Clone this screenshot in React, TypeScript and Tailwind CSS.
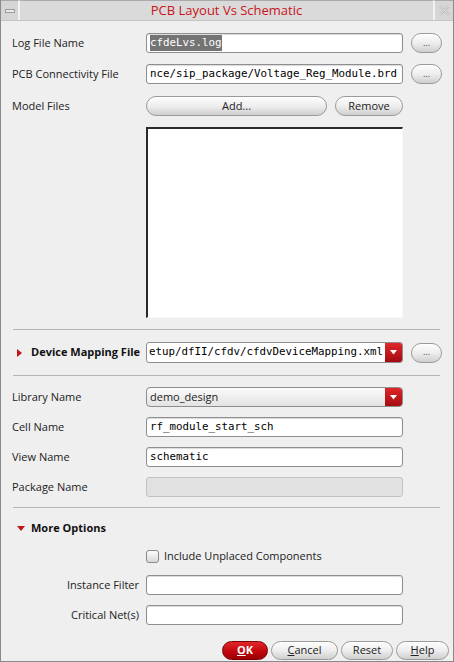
import React from "react";

const sans = { fontFamily: '"Open Sans", "DejaVu Sans", sans-serif' };
const mono = { fontFamily: '"DejaVu Sans Mono", monospace' };

function PillButton({ children, className = "" }: { children: React.ReactNode; className?: string }) {
  return (
    <div
      className={
        "flex items-center justify-center rounded-full border border-[#9a9a9a] bg-gradient-to-b from-[#fdfdfd] via-[#eeeeee] to-[#cfcfcf] text-[11px] text-[#222] shadow-[inset_0_1px_0_#fff] " +
        className
      }
      style={sans}
    >
      {children}
    </div>
  );
}

function Dots() {
  return (
    <PillButton className="w-[31px] h-[20px]">
      <span className="text-[9px] leading-none -mt-[2px] text-[#444]">...</span>
    </PillButton>
  );
}

function TextInput({ children, className = "" }: { children?: React.ReactNode; className?: string }) {
  return (
    <div
      className={
        "w-[257px] h-[20px] rounded-[3px] border border-[#8e8e8e] bg-white flex items-center pl-[3px] overflow-hidden whitespace-nowrap text-[10.8px] text-black shadow-[inset_0_1px_1px_rgba(0,0,0,0.15)] " +
        className
      }
      style={mono}
    >
      {children}
    </div>
  );
}

function RedArrow({ className = "" }: { className?: string }) {
  return (
    <div className={"w-[17px] shrink-0 h-full bg-gradient-to-b from-[#e0262a] to-[#a30b10] flex items-center justify-center " + className}>
      <svg width="7" height="5" viewBox="0 0 7 5">
        <polygon points="0,0 7,0 3.5,4.5" fill="#fff" />
      </svg>
    </div>
  );
}

function Label({ children, className = "" }: { children: React.ReactNode; className?: string }) {
  return (
    <div className={"w-[134px] shrink-0 text-[11px] text-[#222] whitespace-nowrap " + className} style={sans}>
      {children}
    </div>
  );
}

function Separator() {
  return <div className="mx-[12px] mr-[13px] h-[1px] bg-[#b5b5b5]" />;
}

export default function App() {
  return (
    <div className="w-[454px] h-[662px] bg-[#efefef] border border-[#8a8a8a] border-t-0 flex flex-col overflow-hidden" style={sans}>
      {/* title bar */}
      <div className="h-[21px] shrink-0 flex bg-[#dadada] border-b border-[#c4c4c4]">
        <div className="w-[19px] h-full border-r-2 border-[#f2f2f2] bg-[#d6d6d6] flex items-center justify-center border-t border-t-[#aaa]">
          <div className="w-[10px] h-[4px] border border-[#9c9c9c] bg-[#e8e8e8]" />
        </div>
        <div className="flex-1 flex items-center justify-center border-t border-[#aaa] text-[13px] text-[#c8141a]" style={sans}>
          PCB Layout Vs Schematic
        </div>
        <div className="w-[20px] h-full border-l-2 border-[#f2f2f2] bg-[#d6d6d6] border-t border-t-[#aaa] flex items-center justify-center">
          <svg width="11" height="11" viewBox="0 0 11 11">
            <path d="M1 1 L10 10 M10 1 L1 10" stroke="#bdbdbd" strokeWidth="2.4" />
            <path d="M1 1 L10 10 M10 1 L1 10" stroke="#ececec" strokeWidth="0.8" />
          </svg>
        </div>
      </div>

      {/* body */}
      <div className="flex flex-col pl-[11px]">
        <div className="mt-[12px] h-[20px] flex items-center">
          <Label>Log File Name</Label>
          <TextInput>
            <span className="bg-[#747474] text-white">cfdeLvs.log</span>
          </TextInput>
          <div className="ml-[8px]"><Dots /></div>
        </div>

        <div className="mt-[11px] h-[20px] flex items-center">
          <Label>PCB Connectivity File</Label>
          <TextInput>nce/sip_package/Voltage_Reg_Module.brd</TextInput>
          <div className="ml-[8px]"><Dots /></div>
        </div>

        <div className="mt-[12px] h-[20px] flex items-center">
          <Label>Model Files</Label>
          <PillButton className="w-[181px] h-[20px]">Add...</PillButton>
          <PillButton className="ml-[8px] w-[68px] h-[20px]">Remove</PillButton>
        </div>

        <div className="mt-[11px] ml-[134px] w-[257px] h-[191px] bg-white border-t-2 border-l-2 border-[#2a2a2a] border-r border-b border-r-[#f8f8f8] border-b-[#f8f8f8]" />
      </div>

      <div className="mt-[11px]"><Separator /></div>

      <div className="mt-[12px] h-[21px] flex items-center pl-[11px]">
        <div className="w-[134px] shrink-0 flex items-center whitespace-nowrap">
          <svg width="5" height="8" viewBox="0 0 5 8" className="ml-[5px]">
            <polygon points="0,0 5,4 0,8" fill="#c0141a" />
          </svg>
          <span className="ml-[9px] text-[11px] font-bold text-[#111]" style={sans}>Device Mapping File</span>
        </div>
        <div className="w-[257px] h-[21px] rounded-[3px] border border-[#8e8e8e] bg-white flex items-center overflow-hidden">
          <div className="flex-1 pl-[2px] whitespace-nowrap overflow-hidden text-[10.8px] text-black" style={mono}>etup/dfII/cfdv/cfdvDeviceMapping.xml</div>
          <RedArrow />
        </div>
        <div className="ml-[8px]"><Dots /></div>
      </div>

      <div className="mt-[12px]"><Separator /></div>

      <div className="flex flex-col pl-[11px]">
        <div className="mt-[11px] h-[20px] flex items-center">
          <Label>Library Name</Label>
          <div className="w-[257px] h-[20px] rounded-[4px] border border-[#8e8e8e] bg-gradient-to-b from-[#fbfbfb] to-[#e3e3e3] flex items-center overflow-hidden">
            <div className="flex-1 pl-[3px] text-[11px] text-[#222]" style={sans}>demo_design</div>
            <RedArrow />
          </div>
        </div>

        <div className="mt-[10px] h-[20px] flex items-center">
          <Label>Cell Name</Label>
          <TextInput>rf_module_start_sch</TextInput>
        </div>

        <div className="mt-[10px] h-[20px] flex items-center">
          <Label>View Name</Label>
          <TextInput>schematic</TextInput>
        </div>

        <div className="mt-[10px] h-[20px] flex items-center">
          <Label>Package Name</Label>
          <div className="w-[257px] h-[20px] rounded-[3px] border border-[#c2c2c2] bg-[#e1e1e1]" />
        </div>
      </div>

      <div className="mt-[10px]"><Separator /></div>

      <div className="mt-[11px] h-[18px] flex items-center pl-[16px]">
        <svg width="8" height="5" viewBox="0 0 8 5">
          <polygon points="0,0 8,0 4,5" fill="#c0141a" />
        </svg>
        <span className="ml-[6px] text-[11px] font-bold text-[#111]" style={sans}>More Options</span>
      </div>

      <div className="mt-[12px] h-[14px] flex items-center pl-[145px]">
        <div className="w-[13px] h-[13px] rounded-[3px] border border-[#8a8a8a] bg-gradient-to-b from-[#fdfdfd] to-[#d8d8d8]" />
        <span className="ml-[5px] text-[11px] text-[#222]" style={sans}>Include Unplaced Components</span>
      </div>

      <div className="mt-[12px] h-[20px] flex items-center pl-[11px]">
        <div className="w-[134px] shrink-0 pr-[7px] text-right text-[11px] text-[#222]" style={sans}>Instance Filter</div>
        <TextInput />
      </div>

      <div className="mt-[10px] h-[20px] flex items-center pl-[11px]">
        <div className="w-[134px] shrink-0 pr-[7px] text-right text-[11px] text-[#222]" style={sans}>Critical Net(s)</div>
        <TextInput />
      </div>

      <div className="mt-[16px] flex justify-end pr-[4px] gap-[3px]">
        <div className="w-[46px] h-[19px] rounded-full border border-[#7a0000] bg-gradient-to-b from-[#e2262b] via-[#c4080e] to-[#9c0005] flex items-center justify-center text-[11px] font-bold text-white" style={sans}>
          <span><span className="underline">O</span>K</span>
        </div>
        <PillButton className="w-[67px] h-[19px]"><span><span className="underline">C</span>ancel</span></PillButton>
        <PillButton className="w-[52px] h-[19px]">Reset</PillButton>
        <PillButton className="w-[53px] h-[19px]"><span><span className="underline">H</span>elp</span></PillButton>
      </div>
    </div>
  );
}
